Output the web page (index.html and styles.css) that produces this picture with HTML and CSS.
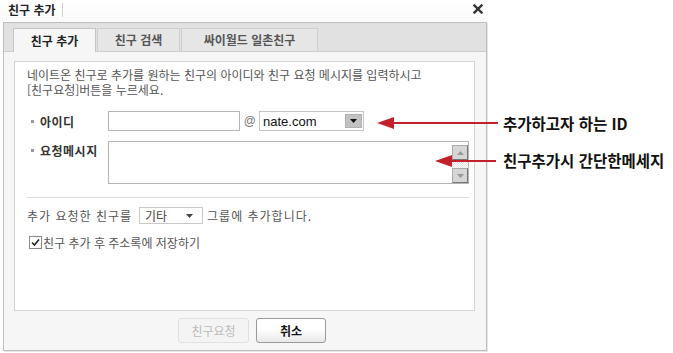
FILE: index.html
```html
<!DOCTYPE html>
<html lang="ko">
<head>
<meta charset="utf-8">
<link rel="stylesheet" href="styles.css">
</head>
<body>
<div class="page">
  <div class="dialog">
    <div class="titlebar">
      <span class="title">친구 추가</span>
      <span class="title-sep"></span>
      <svg class="close" width="10" height="10" viewBox="0 0 10 10"><path d="M1.5 1.5 L8.5 8.5 M8.5 1.5 L1.5 8.5" stroke="#333" stroke-width="2.4" stroke-linecap="square"/></svg>
    </div>
    <div class="panel">
      <div class="tabbar">
        <div class="tab active w83">친구 추가</div>
        <div class="tab w83">친구 검색</div>
        <div class="tab w137">싸이월드 일촌친구</div>
      </div>
      <div class="content">
        <div class="box">
          <p class="desc"><span class="line">네이트온 친구로 추가를 원하는 친구의 아이디와 친구 요청 메시지를 입력하시고</span><span class="line">[친구요청]버튼을 누르세요.</span></p>
          <div class="row row-id">
            <div class="label"><span class="dot"></span>아이디</div>
            <div class="input"></div>
            <span class="at">@</span>
            <div class="select">
              <span class="sel-text">nate.com</span>
              <span class="sel-btn"><svg width="7" height="4" viewBox="0 0 7 4"><path d="M0 0 H7 L3.5 4 Z" fill="#111"/></svg></span>
            </div>
          </div>
          <div class="row row-msg">
            <div class="label"><span class="dot"></span>요청메시지</div>
            <div class="textarea">
              <div class="scroll">
                <span class="sbtn"><svg width="7" height="4" viewBox="0 0 7 4"><path d="M0 4 H7 L3.5 0 Z" fill="#999"/></svg></span>
                <span class="track"></span>
                <span class="sbtn"><svg width="7" height="4" viewBox="0 0 7 4"><path d="M0 0 H7 L3.5 4 Z" fill="#999"/></svg></span>
              </div>
            </div>
          </div>
          <div class="divider"></div>
          <div class="row row-group">
            <span class="spaced">추가 요청한 친구를</span>
            <div class="gselect"><span>기타</span><svg width="7" height="4" viewBox="0 0 7 4"><path d="M0 0 H7 L3.5 4 Z" fill="#444"/></svg></div>
            <span class="spaced">그룹에 추가합니다.</span>
          </div>
          <div class="row row-check">
            <span class="checkbox"><svg width="11" height="11" viewBox="0 0 11 11"><path d="M2 5.5 L4.5 8 L9 2.5" fill="none" stroke="#222" stroke-width="1.6"/></svg></span>
            <span>친구 추가 후 주소록에 저장하기</span>
          </div>
        </div>
      </div>
      <div class="buttons">
        <div class="btn disabled">친구요청</div>
        <div class="btn cancel">취소</div>
      </div>
    </div>
  </div>

  <svg class="arrow arrow1" width="122" height="14" viewBox="0 0 122 14"><path d="M16 7 H121" stroke="#c4202c" stroke-width="2"/><path d="M0 7 L17 1 L17 13 Z" fill="#c4202c"/></svg>
  <div class="note note1">추가하고자 하는 ID</div>
  <svg class="arrow arrow2" width="62" height="14" viewBox="0 0 62 14"><path d="M16 7 H61" stroke="#c4202c" stroke-width="2"/><path d="M0 7 L17 1 L17 13 Z" fill="#c4202c"/></svg>
  <div class="note note2">친구추가시 간단한메세지</div>
</div>
</body>
</html>
```

FILE: styles.css
```css
* { box-sizing: border-box; }
html, body { margin: 0; padding: 0; background: #fff; }
body {
  font-family: "Noto Sans CJK KR", "Noto Sans", sans-serif;
  font-size: 12px;
  color: #333;
}
.page { position: relative; width: 673px; height: 353px; }

.dialog { width: 488px; display: flex; flex-direction: column; }

.titlebar {
  height: 22px;
  display: flex;
  align-items: center;
  padding-left: 8px;
  background: linear-gradient(#fff, #fafafa);
}
.title { font-weight: bold; font-size: 12px; line-height: 14px; color: #222; margin-top: -2px; }
.title-sep { width: 1px; height: 14px; background: #d0d0d0; margin-left: 6px; margin-top: -3px; }
.close { margin-left: auto; margin-right: 5px; margin-top: -4px; }

.panel {
  margin-left: 3px;
  width: 484px;
  height: 329px;
  border: 1px solid #bdbdbd;
  background: #f6f6f6;
  box-shadow: 1px 1px 0 #e6e6e6;
  display: flex;
  flex-direction: column;
}

.tabbar {
  height: 29px;
  background: #e1e1e1;
  border-bottom: 1px solid #cdcdcd;
  display: flex;
  align-items: flex-end;
  padding-left: 9px;
  gap: 1px;
}
.tab {
  height: 23px;
  border: 1px solid #cfcfcf;
  border-bottom: none;
  background: #e6e6e6;
  display: flex;
  align-items: center;
  justify-content: center;
  font-weight: bold;
  color: #555;
  line-height: 14px;
}
.tab.active {
  background: #f6f6f6;
  color: #222;
  height: 24px;
  margin-bottom: -1px;
  border-color: #c4c4c4;
}
.w83 { width: 83px; }
.w137 { width: 137px; }

.content { padding: 9px 11px 0 10px; }
.box {
  height: 250px;
  background: #fff;
  border: 1px solid #d4d4d4;
  padding: 5px 5px 0 12px;
  display: flex;
  flex-direction: column;
}
.desc { margin: 0; color: #555; display: flex; flex-direction: column; }
.line { display: block; height: 15px; line-height: 15px; }

.row { display: flex; align-items: center; }
.label {
  width: 81px;
  display: flex;
  align-items: center;
  font-weight: bold;
  color: #333;
  letter-spacing: 0.5px;
}
.dot { width: 3px; height: 3px; background: #999; margin: 0 6px 0 4px; }

.row-id { margin-top: 14px; height: 20px; }
.input { width: 132px; height: 20px; border: 1px solid #b4b4b4; background: #fff; }
.at { width: 19px; text-align: center; color: #777; font-family: "Liberation Sans", sans-serif; font-size: 12px; font-style: italic; }
.select {
  width: 105px;
  height: 20px;
  border: 1px solid #c4c4c4;
  display: flex;
  align-items: center;
  padding: 0 1px 0 3px;
}
.sel-text { font-family: "Liberation Sans", sans-serif; font-size: 13px; color: #111; flex: 1; }
.sel-btn {
  width: 17px;
  height: 14px;
  background: #c2c2c2;
  border: 1px solid #b0b0b0;
  display: flex;
  align-items: center;
  justify-content: center;
}

.row-msg { margin-top: 10px; align-items: flex-start; }
.row-msg .label { margin-top: 1px; }
.textarea {
  width: 361px;
  height: 43px;
  border: 1px solid #b4b4b4;
  background: #fff;
  display: flex;
  justify-content: flex-end;
}
.scroll {
  width: 16px;
  display: flex;
  flex-direction: column;
  padding-top: 3px;
}
.sbtn {
  width: 16px;
  height: 15px;
  background: #d6d6d6;
  border: 1px solid #aaa;
  border-right-color: #777;
  border-bottom-color: #777;
  display: flex;
  align-items: center;
  justify-content: center;
}
.track {
  flex: 1;
  background-image: repeating-conic-gradient(#e4e4e4 0 25%, #fff 0 50%);
  background-size: 2px 2px;
}

.divider { margin-top: 13px; height: 1px; background: #dcdcdc; }

.row-group { margin-top: 9px; height: 17px; color: #555; }
.spaced { letter-spacing: 1px; }
.gselect {
  width: 64px;
  height: 17px;
  border: 1px solid #c8c8c8;
  display: flex;
  align-items: center;
  justify-content: space-between;
  padding: 0 9px 0 5px;
  margin: 0 4px 0 7px;
  color: #444;
}

.row-check { margin-top: 12px; height: 13px; color: #555; margin-left: 2px; }
.checkbox {
  width: 13px;
  height: 13px;
  border: 1px solid #888;
  background: #fff;
  display: flex;
  align-items: center;
  justify-content: center;
  margin-right: 1px;
}

.buttons {
  display: flex;
  margin-top: 7px;
  padding-left: 174px;
  gap: 7px;
}
.btn {
  height: 25px;
  display: flex;
  align-items: center;
  justify-content: center;
  border-radius: 3px;
  font-size: 12px;
}
.btn.disabled {
  width: 71px;
  background: #f4f4f4;
  border: 1px solid #e0e0e0;
  color: #bbb;
}
.btn.cancel {
  width: 70px;
  border: 1px solid #9a9a9a;
  background: linear-gradient(#fff 0%, #fff 45%, #e8e8e8 100%);
  color: #111;
  font-weight: bold;
}

.arrow { position: absolute; }
.arrow1 { left: 377px; top: 116px; }
.arrow2 { left: 435px; top: 154px; }
.note {
  position: absolute;
  left: 503px;
  font-size: 15.5px;
  font-weight: bold;
  color: #111;
  line-height: 20px;
  white-space: nowrap;
}
.note1 { top: 113px; }
.note2 { top: 150px; }
```
